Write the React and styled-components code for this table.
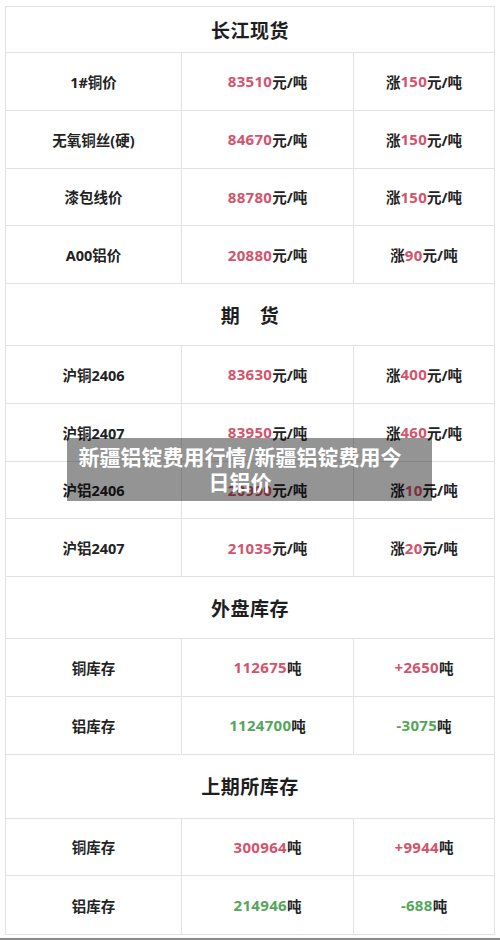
import React from 'react';
import styled, { createGlobalStyle } from 'styled-components';

const GlobalStyle = createGlobalStyle`
  body {
    margin: 0;
    background: #fff;
    font-family: "Noto Sans", "Noto Sans CJK SC", sans-serif;
  }
`;

const Page = styled.div`
  position: relative;
  width: 500px;
  height: 940px;
  padding: 6px 5px 0;
  box-sizing: border-box;
  overflow: hidden;
`;

const Table = styled.div`
  width: 490px;
  border: 1px solid #e2e2e2;
  box-sizing: border-box;
`;

const SectionTitle = styled.div`
  height: ${(p) => p.h}px;
  display: flex;
  align-items: center;
  justify-content: center;
  border-bottom: 1px solid #e2e2e2;
  box-sizing: border-box;
  font-size: 19px;
  font-weight: 700;
  color: #1e1e1e;
  letter-spacing: 0.5px;
`;

const Row = styled.div`
  display: grid;
  grid-template-columns: 175px 172px 1fr;
  height: 57.75px;
  border-bottom: 1px solid #e2e2e2;
  box-sizing: border-box;
  &:last-child {
    border-bottom: none;
  }
`;

const Cell = styled.div`
  display: flex;
  align-items: center;
  justify-content: center;
  font-size: 14.5px;
  font-weight: 700;
  color: #222;
  border-left: ${(p) => (p.first ? 'none' : '1px solid #e2e2e2')};
`;

const Num = styled.span`
  color: ${(p) => (p.down ? '#55a65a' : '#d4536c')};
  font-size: 15px;
  letter-spacing: 0.3px;
`;

const Caption = styled.div`
  position: absolute;
  left: 67px;
  top: 438px;
  width: 365px;
  box-sizing: border-box;
  padding: 6px 27px 7px 8px;
  background: rgba(0, 0, 0, 0.42);
  color: #fff;
  font-family: "Noto Sans CJK SC", sans-serif;
  font-size: 21px;
  font-weight: 700;
  line-height: 25px;
  text-align: center;
`;

const BottomLine = styled.div`
  margin-top: 3px;
  height: 3px;
  margin-left: -5px;
  margin-right: -5px;
  background: #8c8c8c;
`;

const sections = [
  {
    title: '长江现货',
    h: 46,
    rows: [
      ['1#铜价', '83510', '150'],
      ['无氧铜丝(硬)', '84670', '150'],
      ['漆包线价', '88780', '150'],
      ['A00铝价', '20880', '90'],
    ],
  },
  {
    title: '期　货',
    h: 62,
    rows: [
      ['沪铜2406', '83630', '400'],
      ['沪铜2407', '83950', '460'],
      ['沪铝2406', '20990', '10'],
      ['沪铝2407', '21035', '20'],
    ],
  },
];

const stocks = [
  {
    title: '外盘库存',
    h: 62,
    rows: [
      ['铜库存', '112675', '+2650', false],
      ['铝库存', '1124700', '-3075', true],
    ],
  },
  {
    title: '上期所库存',
    h: 64,
    rows: [
      ['铜库存', '300964', '+9944', false],
      ['铝库存', '214946', '-688', true],
    ],
  },
];

export default function App() {
  return (
    <Page>
      <GlobalStyle />
      <Table>
        {sections.map((s) => (
          <React.Fragment key={s.title}>
            <SectionTitle h={s.h}>{s.title}</SectionTitle>
            {s.rows.map(([name, price, up]) => (
              <Row key={name}>
                <Cell first>{name}</Cell>
                <Cell>
                  <Num>{price}</Num>元/吨
                </Cell>
                <Cell>
                  涨<Num>{up}</Num>元/吨
                </Cell>
              </Row>
            ))}
          </React.Fragment>
        ))}
        {stocks.map((s) => (
          <React.Fragment key={s.title}>
            <SectionTitle h={s.h}>{s.title}</SectionTitle>
            {s.rows.map(([name, total, change, down]) => (
              <Row key={s.title + name}>
                <Cell first>{name}</Cell>
                <Cell>
                  <Num down={down}>{total}</Num>吨
                </Cell>
                <Cell>
                  <Num down={down}>{change}</Num>吨
                </Cell>
              </Row>
            ))}
          </React.Fragment>
        ))}
      </Table>
      <BottomLine />
      <Caption>新疆铝锭费用行情/新疆铝锭费用今日铝价</Caption>
    </Page>
  );
}
